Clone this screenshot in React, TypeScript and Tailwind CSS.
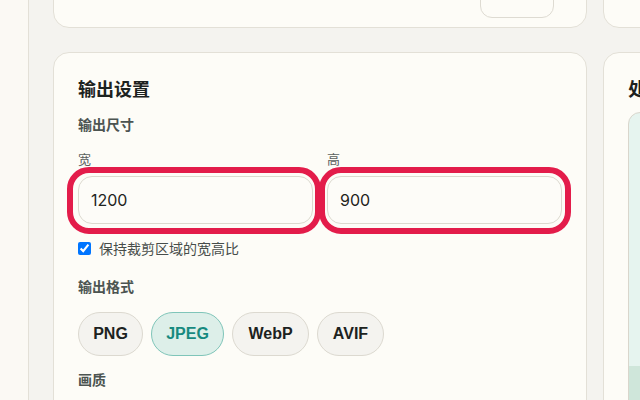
import React from "react";

// output settings panel

const formats = [
  { name: "PNG", w: "w-[65px]" },
  { name: "JPEG", w: "w-[73px]" },
  { name: "WebP", w: "w-[77px]" },
  { name: "AVIF", w: "w-[67px]" },
];

function SizeField({ label, value, ring }: { label: string; value: string; ring: string }) {
  return (
    <div className="flex flex-col">
      <span className="text-[13px] leading-[18px] text-[#5b615e]">{label}</span>
      <div className="relative mt-[8px]">
        {/* highlight ring */}
        <div className={`absolute ${ring} rounded-[22px] border-[6px] border-[#e31c4a] pointer-events-none`} />
        <input
          defaultValue={value}
          className="w-full h-[48px] rounded-[14px] border-[1.5px] border-[#dcd9cf] bg-[#fdfcf8] pl-[12px] text-[16px] text-[#1f2421] outline-none font-['Inter',sans-serif]"
        />
      </div>
    </div>
  );
}

export default function App() {
  return (
    <div className="w-[640px] h-[400px] overflow-hidden flex bg-[#f4f3ef] font-['Noto_Sans_CJK_SC',sans-serif]">
      {/* side strip */}
      <div className="w-[29px] shrink-0 h-full border-r border-[#e3e0d7] bg-[#fbf9f4] bg-[radial-gradient(#ede9df_0.6px,transparent_0.7px)] bg-[length:4px_4px]" />

      <div className="flex gap-[16px] pl-[24px] shrink-0">
        {/* left column */}
        <div className="w-[534px] shrink-0 flex flex-col gap-[24px]">
          <div className="shrink-0 -mt-[16px] h-[44px] rounded-2xl border border-[#e3e0d7] bg-[#fdfcf7] flex justify-end items-start pt-[3px] pr-[32px]">
            <div className="w-[74px] h-[30px] rounded-[12px] border border-[#dedbd2] bg-[#fdfcf7]" />
          </div>

          <div className="shrink-0 h-[400px] rounded-2xl border border-[#e3e0d7] bg-[#fdfcf7] px-[24px] pt-[23px]">
            <h2 className="text-[18px] leading-[24px] font-bold text-[#1c2220]">输出设置</h2>

            <div className="mt-[14px] text-[14px] leading-[20px] font-semibold text-[#4c5451]">输出尺寸</div>

            <div className="mt-[16px] grid grid-cols-2 gap-[14px]">
              <SizeField label="宽" value="1200" ring="-left-[11px] -right-[8px] -top-[9px] -bottom-[10px]" />
              <SizeField label="高" value="900" ring="-left-[8px] -right-[9px] -top-[9px] -bottom-[10px]" />
            </div>

            <label className="mt-[14px] flex items-center gap-[8px] text-[14px] leading-[20px] text-[#474d4a]">
              <input type="checkbox" defaultChecked className="w-[13px] h-[13px] m-0" />
              保持裁剪区域的宽高比
            </label>

            <div className="mt-[18px] text-[14px] leading-[20px] font-semibold text-[#4c5451]">输出格式</div>

            <div className="mt-[16px] flex gap-[8px]">
              {formats.map(f => (
                <button
                  key={f.name}
                  className={`${f.w} h-[44px] flex items-center justify-center rounded-full border text-[16px] font-bold font-['Liberation_Sans',sans-serif] ${
                    f.name === "JPEG"
                      ? "bg-[#ddefe9] border-[#7fc5b9] text-[#178a80]"
                      : "bg-[#f4f3ef] border-[#dcd9d0] text-[#1c2220]"
                  }`}
                >
                  {f.name}
                </button>
              ))}
            </div>

            <div className="mt-[13px] text-[14px] leading-[20px] font-semibold text-[#4c5451]">画质</div>
          </div>
        </div>

        {/* right column */}
        <div className="w-[300px] shrink-0 flex flex-col gap-[24px]">
          <div className="shrink-0 -mt-[16px] h-[44px] rounded-2xl border border-[#e3e0d7] bg-[#fdfcf7]" />
          <div className="shrink-0 h-[400px] rounded-2xl border border-[#e3e0d7] bg-[#fdfcf7] px-[24px] pt-[23px]">
            <h2 className="text-[18px] leading-[24px] font-bold text-[#1c2220]">处理预览</h2>
            <div className="mt-[12px] h-[300px] rounded-xl border border-[#d9d6cc] bg-[#e6f4ef] flex flex-col overflow-hidden">
              <div className="h-[253px] shrink-0" />
              <div className="flex-1 bg-[#cfe6da]" />
            </div>
          </div>
        </div>
      </div>
    </div>
  );
}
